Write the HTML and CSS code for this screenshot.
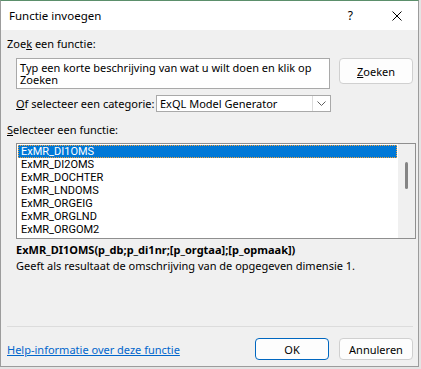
FILE: index.html
```html
<!DOCTYPE html>
<html lang="nl">

<head>
    <meta charset="UTF-8">
    <meta name="viewport" content="width=device-width, initial-scale=1.0">
    <title>Functie invoegen</title>
    <link rel="stylesheet" href="styles.css">
</head>

<body>
    <div class="dialog">
        <!-- title bar -->
        <header class="titlebar">
            <span class="title">Functie invoegen</span>
            <span class="help">?</span>
            <svg class="close" width="10" height="10" viewBox="0 0 10 10">
                <path d="M0.5 0.5 L9.5 9.5 M9.5 0.5 L0.5 9.5" stroke="#000" stroke-width="1" fill="none" />
            </svg>
        </header>

        <section class="content">
            <div class="label">Zoe<u>k</u> een functie:</div>

            <div class="search-row">
                <div class="searchbox">Typ een korte beschrijving van wat u wilt doen en klik op Zoeken</div>
                <button class="btn search-btn" type="button"><u>Z</u>oeken</button>
            </div>

            <div class="category-row">
                <span class="cat-label"><u>O</u>f selecteer een categorie:</span>
                <div class="select">
                    <span class="select-value">ExQL Model Generator</span>
                    <span class="select-arrow">
                        <svg width="9" height="5" viewBox="0 0 9 5">
                            <polyline points="0.5,0.5 4.5,4.5 8.5,0.5" stroke="#5f5f5f" stroke-width="1" fill="none" />
                        </svg>
                    </span>
                </div>
            </div>

            <div class="label list-label"><u>S</u>electeer een functie:</div>

            <div class="listbox">
                <ul class="items">
                    <li class="selected">ExMR_DI1OMS</li>
                    <li>ExMR_DI2OMS</li>
                    <li>ExMR_DOCHTER</li>
                    <li>ExMR_LNDOMS</li>
                    <li>ExMR_ORGEIG</li>
                    <li>ExMR_ORGLND</li>
                    <li>ExMR_ORGOM2</li>
                </ul>
                <div class="scrollbar">
                    <div class="thumb"></div>
                </div>
            </div>

            <p class="signature">ExMR_DI1OMS(p_db;p_di1nr;[p_orgtaa];[p_opmaak])</p>
            <p class="description">Geeft als resultaat de omschrijving van de opgegeven dimensie 1.</p>

            <hr class="separator">

            <footer class="bottom-row">
                <a class="help-link" href="#">Help-informatie over deze functie</a>
                <button class="btn default-btn" type="button">OK</button>
                <button class="btn" type="button">Annuleren</button>
            </footer>
        </section>
    </div>
</body>

</html>
```

FILE: styles.css
```css
body {
    margin: 0;
    background-color: #e4e4e4;
    font-family: "Noto Sans", "Open Sans", sans-serif;
    font-size: 11px;
    color: #000;
}

.dialog {
    width: 419px;
    height: 367px;
    box-sizing: border-box;
    border: 1px solid #9c9c9c;
    border-top: 1px solid #5b8f6b;
    background-color: #f0f0f0;
}

.titlebar {
    height: 29px;
    background-color: #fff;
    display: flex;
    align-items: center;
    padding-left: 8px;
}

.title {
    flex: 1;
    font-size: 11.5px;
}

.help {
    font-size: 12px;
    margin-right: 39px;
}

.close {
    margin-right: 16px;
}

.content {
    padding: 0 5px 0 6px;
}

.label {
    line-height: 16px;
    margin-top: 6px;
}

.search-row {
    display: flex;
    align-items: flex-start;
    margin-top: 6px;
    margin-left: 9px;
}

.searchbox {
    width: 315px;
    height: 31px;
    box-sizing: border-box;
    border: 1px solid #a9a9a9;
    background-color: #fff;
    padding: 3px 3px;
    line-height: 12px;
    overflow: hidden;
}

.btn {
    width: 74px;
    height: 22px;
    box-sizing: border-box;
    border: 1px solid #d0d0d0;
    border-radius: 4px;
    background-color: #fdfdfd;
    font-family: inherit;
    font-size: 11px;
    color: #000;
    padding: 0;
}

.search-btn {
    height: 26px;
    margin-left: 9px;
}

.category-row {
    display: flex;
    align-items: center;
    margin-top: 6px;
    margin-left: 9px;
    height: 17px;
}

.cat-label {
    width: 140px;
    white-space: nowrap;
}

.select {
    width: 175px;
    height: 17px;
    box-sizing: border-box;
    border: 1px solid #a9a9a9;
    background-color: #fff;
    display: flex;
    align-items: center;
}

.select-value {
    flex: 1;
    padding-left: 3px;
    line-height: 15px;
}

.select-arrow {
    width: 17px;
    height: 15px;
    border-left: 1px solid #dcdcdc;
    display: flex;
    align-items: center;
    justify-content: center;
}

.list-label {
    margin-top: 10px;
}

.listbox {
    margin-top: 5px;
    margin-left: 9px;
    width: 400px;
    height: 96px;
    box-sizing: border-box;
    border: 1px solid #8f8f8f;
    background-color: #fff;
    display: flex;
}

.items {
    flex: 1;
    list-style: none;
    margin: 0;
    padding: 1px 1px 0 1px;
    overflow: hidden;
    font-family: Roboto, "Noto Sans", sans-serif;
    font-size: 11px;
}

.items li {
    height: 13px;
    line-height: 13px;
    padding-left: 3px;
}

.items li.selected {
    background-color: #0078d7;
    color: #fff;
    outline: 1px dotted #f3a23c;
    outline-offset: -1px;
}

.scrollbar {
    width: 17px;
    background-color: #f0f0f0;
    position: relative;
}

.thumb {
    position: absolute;
    left: 7px;
    top: 18px;
    width: 3px;
    height: 27px;
    border-radius: 2px;
    background-color: #858585;
}

.signature {
    margin: 3px 0 0 9px;
    line-height: 16px;
    font-weight: bold;
}

.description {
    margin: 0 0 0 9px;
    line-height: 16px;
}

.separator {
    margin: 52px 0 0 0;
    border: 0;
    border-top: 1px solid #dcdcdc;
    height: 0;
}

.bottom-row {
    display: flex;
    align-items: center;
    margin-top: 11px;
}

.help-link {
    flex: 1;
    color: #0066cc;
    text-decoration: underline;
}

.default-btn {
    border: 1px solid #0067c0;
    margin-right: 10px;
}
```
